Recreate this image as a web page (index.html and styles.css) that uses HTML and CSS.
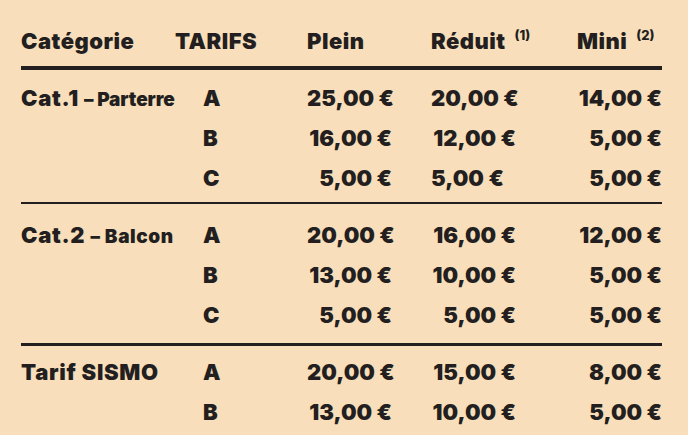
FILE: index.html
```html
<!DOCTYPE html>
<html lang="fr">
<head>
<meta charset="utf-8">
<title>Tarifs</title>
<link rel="stylesheet" href="styles.css">
</head>
<body>
<div class="tarifs">
  <div class="row head">
    <div class="c-cat">Catégorie</div>
    <div class="c-tarif">TARIFS</div>
    <div class="c-plein">Plein</div>
    <div class="c-reduit">Réduit <sup>(1)</sup></div>
    <div class="c-mini">Mini <sup>(2)</sup></div>
  </div>

  <div class="group g1">
    <div class="row">
      <div class="c-cat label">Cat.1 <span class="sub cond">– Parterre</span></div>
      <div class="c-tarif letter">A</div>
      <div class="c-plein price">25,00 €</div>
      <div class="c-reduit price">20,00 €</div>
      <div class="c-mini price">14,00 €</div>
    </div>
    <div class="row">
      <div class="c-cat"></div>
      <div class="c-tarif letter">B</div>
      <div class="c-plein price">16,00 €</div>
      <div class="c-reduit price">12,00 €</div>
      <div class="c-mini price">5,00 €</div>
    </div>
    <div class="row">
      <div class="c-cat"></div>
      <div class="c-tarif letter">C</div>
      <div class="c-plein price">5,00 €</div>
      <div class="c-reduit price left">5,00 €</div>
      <div class="c-mini price">5,00 €</div>
    </div>
  </div>

  <div class="group g2">
    <div class="row">
      <div class="c-cat label">Cat.2 <span class="sub">– Balcon</span></div>
      <div class="c-tarif letter">A</div>
      <div class="c-plein price">20,00 €</div>
      <div class="c-reduit price">16,00 €</div>
      <div class="c-mini price">12,00 €</div>
    </div>
    <div class="row">
      <div class="c-cat"></div>
      <div class="c-tarif letter">B</div>
      <div class="c-plein price">13,00 €</div>
      <div class="c-reduit price">10,00 €</div>
      <div class="c-mini price">5,00 €</div>
    </div>
    <div class="row">
      <div class="c-cat"></div>
      <div class="c-tarif letter">C</div>
      <div class="c-plein price">5,00 €</div>
      <div class="c-reduit price">5,00 €</div>
      <div class="c-mini price">5,00 €</div>
    </div>
  </div>

  <div class="group g3">
    <div class="row">
      <div class="c-cat label">Tarif SISMO</div>
      <div class="c-tarif letter">A</div>
      <div class="c-plein price">20,00 €</div>
      <div class="c-reduit price">15,00 €</div>
      <div class="c-mini price">8,00 €</div>
    </div>
    <div class="row">
      <div class="c-cat"></div>
      <div class="c-tarif letter">B</div>
      <div class="c-plein price">13,00 €</div>
      <div class="c-reduit price">10,00 €</div>
      <div class="c-mini price">5,00 €</div>
    </div>
  </div>
</div>
</body>
</html>
```

FILE: styles.css
```css
html, body {
  margin: 0;
  padding: 0;
  background: #f8deba;
}

body {
  width: 688px;
  height: 435px;
  overflow: hidden;
  font-family: Inter, "Liberation Sans", sans-serif;
  font-weight: 900;
  color: #231f20;
}

.tarifs {
  margin-left: 21px;
  width: 641px;
}

.row {
  display: grid;
  grid-template-columns: 154px 132px 124px 146px 85px;
  height: 40px;
  line-height: 40px;
  font-size: 22px;
  white-space: nowrap;
}

.head {
  height: 30px;
  line-height: 30px;
  padding: 26px 0 10px;
  border-bottom: 4px solid #231f20;
  letter-spacing: 0.5px;
}

.head sup {
  font-size: 13px;
  font-weight: 800;
  letter-spacing: 0;
  vertical-align: 0;
  position: relative;
  top: -9px;
  margin-left: 4px;
}

.label {
  letter-spacing: 0.7px;
}

.group {
  border-top: 2px solid #231f20;
}

.g1 {
  border-top: 0;
  padding: 8px 0 4px;
}

.g2 {
  padding: 11px 0 8px;
}

.g3 {
  border-top-width: 3px;
  padding: 6px 0 0;
}

.letter {
  padding-left: 28px;
}

.price {
  text-align: right;
}

.c-plein.price {
  padding-right: 39px;
}

.c-reduit.price {
  padding-right: 61px;
}

.c-reduit.price.left {
  text-align: left;
}

.sub {
  font-size: 19px;
  letter-spacing: 0.6px;
}

.sub.cond {
  letter-spacing: -0.1px;
}
```
